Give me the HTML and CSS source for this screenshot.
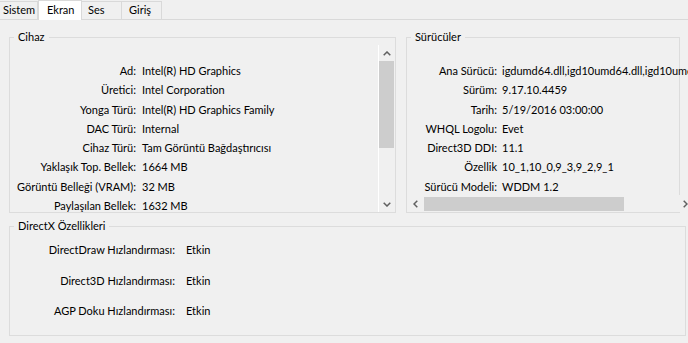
FILE: index.html
```html
<!DOCTYPE html>
<html lang="tr">
<head>
<meta charset="utf-8">
<title>DirectX Tanı Aracı - Ekran</title>
<link rel="stylesheet" href="styles.css">
</head>
<body>
<div class="tabs">
  <div class="tab tab-first">Sistem</div>
  <div class="tab tab-active">Ekran</div>
  <div class="tab">Ses</div>
  <div class="tab tab-last">Giriş</div>
</div>
<div class="panel">
  <div class="top">
    <fieldset class="group device">
      <legend>Cihaz</legend>
      <div class="list">
        <div class="rows rows-device">
          <div class="k">Ad:</div><div class="v">Intel(R) HD Graphics</div>
          <div class="k">Üretici:</div><div class="v">Intel Corporation</div>
          <div class="k">Yonga Türü:</div><div class="v">Intel(R) HD Graphics Family</div>
          <div class="k">DAC Türü:</div><div class="v">Internal</div>
          <div class="k">Cihaz Türü:</div><div class="v">Tam Görüntü Bağdaştırıcısı</div>
          <div class="k">Yaklaşık Top. Bellek:</div><div class="v">1664 MB</div>
          <div class="k">Görüntü Belleği (VRAM):</div><div class="v">32 MB</div>
          <div class="k">Paylaşılan Bellek:</div><div class="v">1632 MB</div>
        </div>
        <div class="vscroll">
          <div class="sbtn sbtn-v"><svg width="8" height="5" viewBox="0 0 8 5"><path d="M0.7 4.3 L4 1 L7.3 4.3" fill="none" stroke="#606060" stroke-width="1.5"/></svg></div>
          <div class="vthumb"></div>
          <div class="strack"></div>
          <div class="sbtn sbtn-v"><svg width="8" height="5" viewBox="0 0 8 5"><path d="M0.7 0.7 L4 4 L7.3 0.7" fill="none" stroke="#606060" stroke-width="1.5"/></svg></div>
        </div>
      </div>
    </fieldset>
    <fieldset class="group drivers">
      <legend>Sürücüler</legend>
      <div class="list list-drivers">
        <div class="rows rows-drivers">
          <div class="k">Ana Sürücü:</div><div class="v">igdumd64.dll,igd10umd64.dll,igd10umd64.dll</div>
          <div class="k">Sürüm:</div><div class="v">9.17.10.4459</div>
          <div class="k">Tarih:</div><div class="v">5/19/2016 03:00:00</div>
          <div class="k">WHQL Logolu:</div><div class="v">Evet</div>
          <div class="k">Direct3D DDI:</div><div class="v">11.1</div>
          <div class="k">Özellik</div><div class="v">10_1,10_0,9_3,9_2,9_1</div>
          <div class="k">Sürücü Modeli:</div><div class="v">WDDM 1.2</div>
        </div>
        <div class="hscroll">
          <div class="sbtn sbtn-h"><svg width="5" height="8" viewBox="0 0 5 8"><path d="M4.3 0.7 L1 4 L4.3 7.3" fill="none" stroke="#606060" stroke-width="1.5"/></svg></div>
          <div class="hthumb"></div>
          <div class="strack"></div>
          <div class="sbtn sbtn-h"><svg width="5" height="8" viewBox="0 0 5 8"><path d="M0.7 0.7 L4 4 L0.7 7.3" fill="none" stroke="#606060" stroke-width="1.5"/></svg></div>
        </div>
      </div>
    </fieldset>
  </div>
  <fieldset class="group features">
    <legend>DirectX Özellikleri</legend>
    <div class="rows rows-features">
      <div class="k">DirectDraw Hızlandırması:</div><div class="v">Etkin</div>
      <div class="k">Direct3D Hızlandırması:</div><div class="v">Etkin</div>
      <div class="k">AGP Doku Hızlandırması:</div><div class="v">Etkin</div>
    </div>
  </fieldset>
</div>
</body>
</html>
```

FILE: styles.css
```css
html, body {
  margin: 0;
  padding: 0;
}
body {
  width: 688px;
  height: 343px;
  overflow: hidden;
  background: #f0f0f0;
  color: #000;
  font-family: Lato, "Noto Sans", sans-serif;
  font-size: 11px;
  line-height: 14px;
}

/* ---- tabs ---- */
.tabs {
  display: flex;
  align-items: flex-end;
  height: 19px;
  border-bottom: 1px solid #d9d9d9;
}
.tab {
  box-sizing: border-box;
  width: 40px;
  height: 18px;
  padding: 0 0 0 6px;
  border-top: 1px solid #d9d9d9;
  border-right: 1px solid #d9d9d9;
  line-height: 16px;
  white-space: nowrap;
  background: #f0f0f0;
}
.tab-first {
  width: 38px;
  padding-left: 3px;
}
.tab-active {
  width: 44px;
  height: 20px;
  margin-bottom: -1px;
  padding-left: 8px;
  padding-top: 1px;
  border-left: 1px solid #d9d9d9;
  background: #fff;
}
.tab-last {
  padding-left: 7px;
}

/* ---- panel ---- */
.panel {
  padding: 10px 0 0 9px;
}
.top {
  display: flex;
  align-items: flex-start;
}
.group {
  margin: 0;
  padding: 0;
  min-width: 0;
  border: 1px solid #dcdcdc;
  box-sizing: border-box;
}
.group legend {
  margin-left: 4px;
  padding: 0 4px;
  line-height: 14px;
}
.device {
  width: 387px;
}
.drivers {
  width: 274px;
  margin-left: 10px;
}
.features {
  width: 677px;
  margin-top: 6px;
  padding: 2px 0 8px;
}

/* ---- lists ---- */
.list {
  display: flex;
  height: 167px;
  margin-top: 1px;
}
.list-drivers {
  flex-direction: column;
  margin-right: -15px;
  overflow: hidden;
}
.rows {
  display: grid;
  align-content: start;
  column-gap: 6px;
  grid-auto-rows: 19.3px;
  line-height: 19.3px;
  white-space: nowrap;
  overflow: hidden;
}
.rows-device {
  flex: 1;
  grid-template-columns: 126px 1fr;
  padding-top: 16px;
}
.rows-drivers {
  flex: 1;
  grid-template-columns: 90px 1fr;
  column-gap: 5px;
  padding-top: 16px;
}
.rows-features {
  grid-template-columns: 165px 1fr;
  column-gap: 11px;
  grid-auto-rows: 30.5px;
  line-height: 30.5px;
}
.k {
  text-align: right;
}
.v {
  text-align: left;
}

/* ---- scrollbars ---- */
.vscroll {
  box-sizing: border-box;
  width: 17px;
  border-left: 1px solid #fff;
  display: flex;
  flex-direction: column;
}
.sbtn {
  display: flex;
  align-items: center;
  justify-content: center;
}
.sbtn-v {
  height: 16px;
}
.vthumb {
  height: 87px;
  margin-right: 1px;
  background: #cdcdcd;
}
.strack {
  flex: 1;
}
.hscroll {
  display: flex;
  flex: none;
  height: 17px;
  background: #f0f0f0;
}
.sbtn-h {
  width: 17px;
}
.hthumb {
  width: 200px;
  margin: 2px 0 1px;
  background: #cdcdcd;
}
```
